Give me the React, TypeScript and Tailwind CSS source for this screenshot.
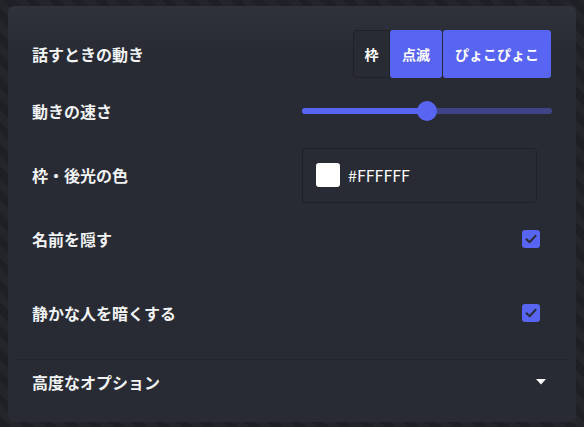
import React from "react";

const font = { fontFamily: '"Noto Sans CJK JP", "Noto Sans", sans-serif' };

function Check() {
  return (
    <div className="flex h-[18px] w-[18px] items-center justify-center rounded-[3px] bg-[#5865f2]">
      <svg width="14" height="14" viewBox="0 0 14 14" fill="none">
        <path d="M2.5 7.2 5.6 10.2 11.6 3.8" stroke="#2a2d35" strokeWidth="2" strokeLinecap="round" strokeLinejoin="round" />
      </svg>
    </div>
  );
}

export default function App() {
  return (
    <div
      className="flex h-[427px] w-[584px] items-start bg-[repeating-linear-gradient(45deg,#1e2025_0px,#1e2025_8px,#23252b_8px,#23252b_16px)] px-2 pt-[6px]"
      style={font}
    >
      <div className="flex h-[416px] w-[568px] flex-col rounded-md bg-gradient-to-b from-[#2f323a] to-[#282b33] to-[12%] pt-6 text-[16px] font-semibold text-[#f2f3f5]">
        <div className="flex h-12 items-center justify-between pl-6 pr-[25px]">
          <span>話すときの動き</span>
          <div className="flex h-12 text-[14px] font-bold text-white">
            <button className="flex w-[37px] items-center justify-center rounded-l-[3px] border border-[#1f2127] bg-[#282b33]">枠</button>
            <button className="rounded-[3px] bg-[#5865f2] px-3">点滅</button>
            <button className="ml-px rounded-[3px] bg-[#5865f2] px-3">ぴょこぴょこ</button>
          </div>
        </div>

        <div className="flex h-[66px] items-center justify-between px-6">
          <span>動きの速さ</span>
          <div className="relative h-5 w-[250px]">
            <div className="absolute left-0 right-0 top-[7px] h-[6px] rounded-full bg-[#3f4486]" />
            <div className="absolute left-0 top-[7px] h-[6px] w-[125px] rounded-full bg-[#5865f2]" />
            <div className="absolute left-[115px] top-0 h-5 w-5 rounded-full bg-[#5865f2]" />
          </div>
        </div>

        <div className="flex h-[62px] items-center pl-6">
          <span className="w-[270px]">枠・後光の色</span>
          <div className="flex h-[55px] w-[235px] items-center gap-2 rounded-[4px] border border-[#1f2127] pl-[13px] font-normal">
            <div className="h-6 w-6 rounded-[3px] bg-white" />
            <span className="text-[16px] text-white">#FFFFFF</span>
          </div>
        </div>

        <div className="flex h-[66px] items-center justify-between pl-6 pr-9">
          <span>名前を隠す</span>
          <Check />
        </div>

        <div className="flex h-[82px] items-center justify-between pl-6 pr-9">
          <span>静かな人を暗くする</span>
          <Check />
        </div>

        <div className="mx-2 mt-[5px] h-px bg-[#22242a]" />

        <div className="flex h-11 items-center justify-between pl-6 pr-[30px]">
          <span>高度なオプション</span>
          <svg width="10" height="6" viewBox="0 0 10 6">
            <path d="M0 0h10L5 5.5z" fill="#ffffff" />
          </svg>
        </div>
      </div>
    </div>
  );
}
